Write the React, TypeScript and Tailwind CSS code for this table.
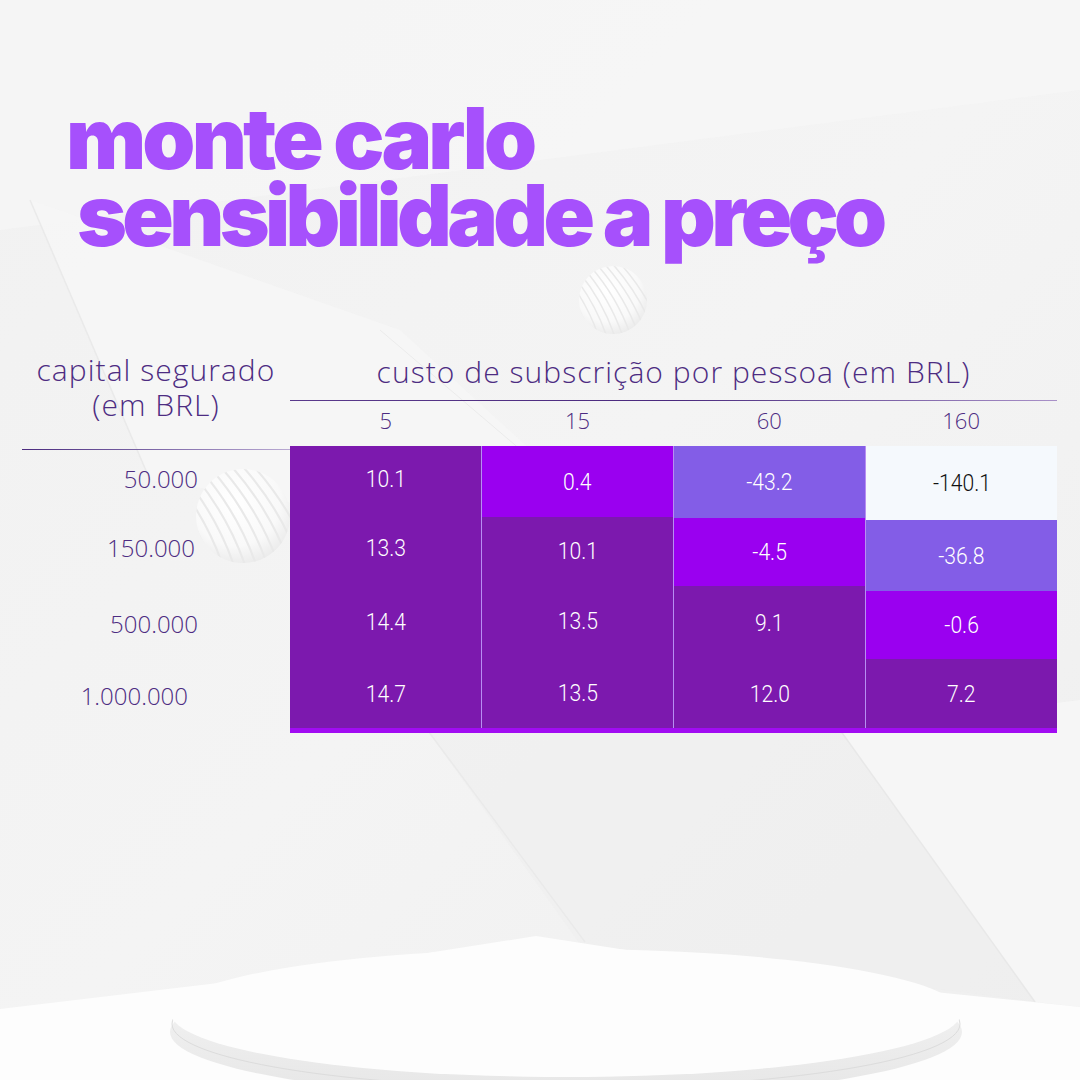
import React from 'react';

type Cell = { v: string; h: string; bg: string; fg?: string };
type Column = { label: string; cells: Cell[]; border: string };

const DARK = 'bg-[#7c19ae]';
const BRIGHT = 'bg-[#9a00f0]';
const MID = 'bg-[#835de7]';
const LIGHT = 'bg-[#f5f9fd]';

const columns: Column[] = [
  {
    label: '5',
    border: '',
    cells: [
      { v: '10.1', h: 'h-[66px]', bg: DARK },
      { v: '13.3', h: 'h-[72px]', bg: DARK },
      { v: '14.4', h: 'h-[76px]', bg: DARK },
      { v: '14.7', h: 'h-[68px]', bg: DARK },
    ],
  },
  {
    label: '15',
    border: 'border-l border-[#b78ef2]',
    cells: [
      { v: '0.4', h: 'h-[71px]', bg: BRIGHT },
      { v: '10.1', h: 'h-[67px]', bg: DARK },
      { v: '13.5', h: 'h-[74px]', bg: DARK },
      { v: '13.5', h: 'h-[70px]', bg: DARK },
    ],
  },
  {
    label: '60',
    border: 'border-l border-[#b78ef2]',
    cells: [
      { v: '-43.2', h: 'h-[72px]', bg: MID },
      { v: '-4.5', h: 'h-[68px]', bg: BRIGHT },
      { v: '9.1', h: 'h-[74px]', bg: DARK },
      { v: '12.0', h: 'h-[68px]', bg: DARK },
    ],
  },
  {
    label: '160',
    border: 'border-l border-[#b78ef2]',
    cells: [
      { v: '-140.1', h: 'h-[74px]', bg: LIGHT, fg: 'text-[#111]' },
      { v: '-36.8', h: 'h-[71px]', bg: MID },
      { v: '-0.6', h: 'h-[68px]', bg: BRIGHT },
      { v: '7.2', h: 'h-[69px]', bg: DARK },
    ],
  },
];

const rowLabels = [
  { t: '50.000', cls: 'h-[66px] pr-[92px] pt-[13px]' },
  { t: '150.000', cls: 'h-[72px] pr-[95px] pt-[16px]' },
  { t: '500.000', cls: 'h-[76px] pr-[92px] pt-[20px]' },
  { t: '1.000.000', cls: 'h-[68px] pr-[102px] pt-[16px]' },
];

function Sphere({ cx, cy, r }: { cx: number; cy: number; r: number }) {
  const id = `sph-${cx}-${cy}`;
  const ridges = Array.from({ length: 11 }, (_, i) => i);
  return (
    <g>
      <defs>
        <radialGradient id={`${id}-g`} cx="42%" cy="35%" r="72%">
          <stop offset="0%" stopColor="#ffffff" />
          <stop offset="65%" stopColor="#f9f9f9" />
          <stop offset="100%" stopColor="#e8e8e8" />
        </radialGradient>
        <clipPath id={`${id}-c`}>
          <circle cx={cx} cy={cy} r={r} />
        </clipPath>
      </defs>
      <circle cx={cx} cy={cy} r={r} fill={`url(#${id}-g)`} />
      <g clipPath={`url(#${id}-c)`}>
        {ridges.map((i) => {
          const off = (i - 5) * (r / 4.2);
          return (
            <path
              key={i}
              d={`M ${cx - r + off} ${cy - r * 1.1} Q ${cx - r * 0.1 + off} ${cy - r * 0.1} ${cx + r * 0.3 + off} ${cy + r * 1.1}`}
              stroke="#e9e9e9"
              strokeWidth={r * 0.045}
              fill="none"
            />
          );
        })}
      </g>
    </g>
  );
}

function Backdrop() {
  return (
    <svg className="absolute inset-0 h-full w-full" viewBox="0 0 1080 1080">
      <defs>
        <linearGradient id="bg" x1="0" y1="0" x2="1" y2="1">
          <stop offset="0%" stopColor="#f1f1f1" />
          <stop offset="50%" stopColor="#f4f4f4" />
          <stop offset="100%" stopColor="#efefef" />
        </linearGradient>
        <linearGradient id="side" x1="0" y1="0" x2="0" y2="1">
          <stop offset="0%" stopColor="#f6f6f6" />
          <stop offset="100%" stopColor="#e6e6e6" />
        </linearGradient>
      </defs>
      <rect width="1080" height="1080" fill="url(#bg)" />
      <polygon points="0,0 1080,0 1080,90 0,230" fill="#f6f6f6" opacity="0.7" />
      <polygon points="30,200 400,330 650,560 150,480" fill="#f6f6f6" opacity="0.8" />
      <line x1="30" y1="200" x2="150" y2="480" stroke="#eaeaea" strokeWidth="1.5" />
      <line x1="380" y1="330" x2="650" y2="560" stroke="#ebebeb" strokeWidth="1" />
      <polygon points="420,720 840,730 1040,1002 580,944" fill="#ededed" opacity="0.5" />
      <polygon points="840,730 1080,700 1080,1007 1035,1002" fill="#f6f6f6" opacity="0.9" />
      <line x1="840" y1="730" x2="1035" y2="1002" stroke="#e8e8e8" strokeWidth="1.5" />
      <line x1="420" y1="720" x2="585" y2="942" stroke="#eaeaea" strokeWidth="1.5" />
      <polygon
        points="0,1009 235,981 383,960 536,936 665,956 915,990 1033,1002 1080,1007 1080,1080 0,1080"
        fill="#fdfdfd"
      />
      <ellipse cx="566" cy="1032" rx="396" ry="66" fill="url(#side)" />
      <ellipse cx="566" cy="1024" rx="394" ry="64" fill="none" stroke="#dcdcdc" strokeWidth="1" />
      <ellipse cx="566" cy="1013" rx="395" ry="64" fill="#fdfdfd" />
      <Sphere cx={613} cy={300} r={34} />
      <Sphere cx={243} cy={516} r={47} />
    </svg>
  );
}

export default function App() {
  return (
    <div className="relative h-[1080px] w-[1080px] overflow-hidden bg-[#f2f2f2] font-['Open_Sans',sans-serif]">
      <Backdrop />

      <div className="relative">
        {/* Title */}
        <div className="pt-[100px] font-['Inter',sans-serif] text-[85px] font-black leading-[77px] text-[#a650fc]">
          <div className="pl-[66px] tracking-[-0.045em]">monte carlo</div>
          <div className="pl-[77px] tracking-[-0.055em]">sensibilidade a preço</div>
        </div>

        {/* Table */}
        <div className="mt-[98px] flex">
          {/* Row header column */}
          <div className="w-[290px] pl-[22px]">
            <div className="flex h-[97px] flex-col items-center text-[30px] font-light leading-[35px] tracking-[0.035em] text-[#4d2c82]">
              <span>capital segurado</span>
              <span>(em BRL)</span>
            </div>
            <div className="h-px bg-linear-to-r from-[#4b2a7e] to-[#b9a9d2]" />
            <div className="flex flex-col text-[24px] font-light leading-[32px] text-[#4d2c82]">
              {rowLabels.map((r) => (
                <div key={r.t} className={`text-right ${r.cls}`}>
                  {r.t}
                </div>
              ))}
            </div>
          </div>

          {/* Data columns */}
          <div className="w-[767px]">
            <div className="flex h-[48px] items-start justify-center text-[30px] font-light leading-[40px] tracking-[0.035em] text-[#4d2c82]">
              custo de subscrição por pessoa (em BRL)
            </div>
            <div className="h-px bg-linear-to-r from-[#5a3a8c] via-[#4b2a7e] to-[#a991c8]" />
            <div className="flex h-[45px]">
              {columns.map((c) => (
                <div
                  key={c.label}
                  className="flex flex-1 items-center justify-center pb-[7px] text-[22px] font-light text-[#4d2c82]"
                >
                  {c.label}
                </div>
              ))}
            </div>
            <div className="flex">
              {columns.map((c) => (
                <div key={c.label} className={`flex flex-1 flex-col ${c.border}`}>
                  {c.cells.map((cell, i) => (
                    <div
                      key={i}
                      className={`flex items-center justify-center ${cell.h} ${cell.bg} ${
                        cell.fg ?? 'text-white'
                      }`}
                    >
                      <span className="inline-block scale-x-[0.88] font-['Roboto',sans-serif] text-[24px] font-light">
                        {cell.v}
                      </span>
                    </div>
                  ))}
                </div>
              ))}
            </div>
            <div className="h-[5px] bg-[#a10cf2]" />
          </div>
        </div>
      </div>
    </div>
  );
}
